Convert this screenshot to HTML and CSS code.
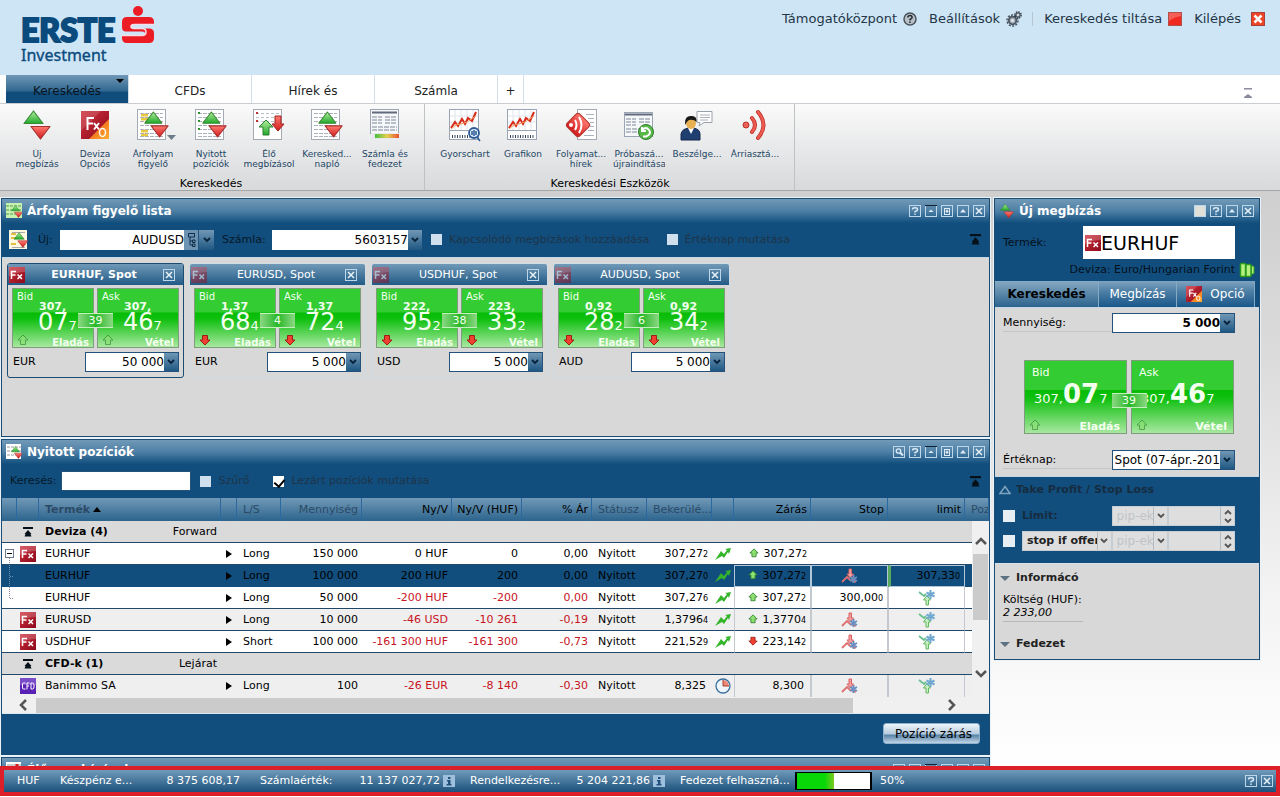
FILE: index.html
```html
<!DOCTYPE html>
<html lang="hu">
<head>
<meta charset="utf-8">
<title>Erste Investment</title>
<link rel="stylesheet" href="styles.css">
</head>
<body>
<svg class="defs" aria-hidden="true">
  <defs>
    <linearGradient id="g-green" x1="0" y1="0" x2="0" y2="1"><stop offset="0" stop-color="#b6f0a0"/><stop offset="1" stop-color="#1fa82a"/></linearGradient>
    <linearGradient id="g-red" x1="0" y1="0" x2="0" y2="1"><stop offset="0" stop-color="#ff7a70"/><stop offset="1" stop-color="#cf1a1a"/></linearGradient>
    <linearGradient id="g-fx" x1="0" y1="0" x2="1" y2="1"><stop offset="0" stop-color="#d0303c"/><stop offset="1" stop-color="#8c0a1c"/></linearGradient>
    <linearGradient id="g-orange" x1="0" y1="0" x2="1" y2="1"><stop offset="0" stop-color="#e84a10"/><stop offset="1" stop-color="#ffae30"/></linearGradient>
    <linearGradient id="g-bar" x1="0" y1="0" x2="1" y2="0"><stop offset="0" stop-color="#3fbf3f"/><stop offset=".5" stop-color="#e6d050"/><stop offset="1" stop-color="#e85030"/></linearGradient>
    <symbol id="updown" viewBox="0 0 28 30"><path d="M10.500 1L20 13.500H1Z" fill="url(#g-green)" stroke="#3a8a34" stroke-width="1.200" stroke-linejoin="round"/><path d="M8 16.500H27L17.500 29Z" fill="url(#g-red)" stroke="#a83030" stroke-width="1.200" stroke-linejoin="round"/></symbol>
    <symbol id="sheet" viewBox="0 0 34 34"><rect x="1.500" y="1.500" width="28" height="30" fill="#fff" stroke="#a3aab4"/></symbol>
    <symbol id="lines" viewBox="0 0 34 34"><path d="M4 5.500H27M4 9.500H27M4 13.500H27M4 17.500H27M4 21.500H27M4 25.500H27M4 28.500H27" stroke="#aab2bd" stroke-dasharray="4 1"/></symbol>
    <symbol id="fx" viewBox="0 0 16 16"><rect width="16" height="16" fill="url(#g-fx)"/><path d="M0 0H16V5Q8 5 0 9Z" fill="#fff" opacity=".2"/><path d="M2.500 12V4.500H7M2.500 8H6.500M8.500 7.500L13 12M13 7.500L8.500 12" stroke="#fff" stroke-width="1.500" fill="none"/></symbol>
    <symbol id="fxo" viewBox="0 0 28 28"><rect width="28" height="28" fill="url(#g-fx)"/><path d="M28 8V28H8Z" fill="url(#g-orange)"/><path d="M0 0H20L0 20Z" fill="#fff" opacity=".15"/><path d="M6.500 19V7H13M6.500 12.500H12M13 12L18 18.500M18 12L13 18.500" stroke="#fff" stroke-width="2" fill="none"/><ellipse cx="21.500" cy="21.500" rx="3" ry="4" fill="none" stroke="#fff" stroke-width="1.500"/></symbol>
    <symbol id="cfd" viewBox="0 0 16 16"><rect width="16" height="16" fill="#5a22b4"/><rect width="16" height="7" fill="#7a4cca"/><path d="M5.500 5H3.500Q2.500 5 2.500 6V10Q2.500 11 3.500 11H5.500M7 11.500V5H9.500M7 8H9M11 5V11H12.500Q14 11 14 9V7Q14 5 12.500 5Z" stroke="#fff" fill="none"/></symbol>
    <symbol id="chev" viewBox="0 0 8 6"><path d="M1 1L4 4L7 1" stroke="currentColor" stroke-width="1.800" fill="none"/></symbol>
    <symbol id="w-help" viewBox="0 0 12 12"><rect x=".5" y=".5" width="11" height="11" fill="none" stroke="#bcd7ea"/><path d="M3.500 4.500Q3.500 2.800 6 2.800T8.500 4.500Q8.500 6 6 6.500V7.500M6 8.500V10" fill="none" stroke="#dcebf7" stroke-width="1.400"/></symbol>
    <symbol id="w-up" viewBox="0 0 12 12"><rect x=".5" y=".5" width="11" height="11" fill="none" stroke="#bcd7ea"/><path d="M3 7.500L6 4L9 7.500Z" fill="#dcebf7"/></symbol>
    <symbol id="w-min" viewBox="0 0 12 12"><rect x=".5" y=".5" width="11" height="11" fill="none" stroke="#bcd7ea"/><path d="M0 .5H12" stroke="#123" stroke-width="1"/><path d="M3.500 7L6 4.500L8.500 7Z" fill="#dcebf7"/></symbol>
    <symbol id="w-dock" viewBox="0 0 12 12"><rect x=".5" y=".5" width="11" height="11" fill="none" stroke="#bcd7ea"/><rect x="3.500" y="3.500" width="5" height="6" fill="none" stroke="#dcebf7"/><path d="M6 4.500V8M4.500 6.200H7.500" stroke="#fff"/></symbol>
    <symbol id="w-close" viewBox="0 0 12 12"><rect x=".5" y=".5" width="11" height="11" fill="none" stroke="#bcd7ea"/><path d="M3 3L9 9M9 3L3 9" stroke="#e6f1fa" stroke-width="1.500"/></symbol>
    <symbol id="w-search" viewBox="0 0 12 12"><rect x=".5" y=".5" width="11" height="11" fill="none" stroke="#bcd7ea"/><circle cx="5.500" cy="5" r="2.200" fill="none" stroke="#dcebf7" stroke-width="1.300"/><path d="M7 6.500L10 9.500" stroke="#dcebf7" stroke-width="2"/></symbol>
    <symbol id="collapse" viewBox="0 0 10 10"><path d="M0 1H10" stroke="#061018" stroke-width="2"/><path d="M5 3L8.500 7H7.500L8.500 9.500H1.500L2.500 7H1.500Z" fill="#061018"/></symbol>
    <symbol id="up" viewBox="0 0 12 12"><path d="M6 1L11 6H8.500V10.500H3.500V6H1Z" fill="#8ce070" stroke="#2d7d2d"/></symbol>
    <symbol id="down" viewBox="0 0 12 12"><path d="M6 11L11 6H8.500V1.500H3.500V6H1Z" fill="#f04030" stroke="#9c2018"/></symbol>
    <symbol id="trend" viewBox="0 0 16 12"><path d="M0 12L6 3L9 6L12 2L10 1L16 0L14 6L13 4L9 10L7 8Z" fill="#35b52c"/></symbol>
    <symbol id="add-stop" viewBox="0 0 18 16"><path d="M1 14L6 9L9 12L15 14" stroke="#e07070" stroke-width="1.800" fill="none"/><path d="M8 1H10.500V6H12.500L9.200 10L6 6H8Z" fill="#f4a0a0" stroke="#d86060"/><path d="M12.500 7V15M9 9L16 13M16 9L9 13" stroke="#6a8fc0" stroke-width="2"/></symbol>
    <symbol id="add-limit" viewBox="0 0 18 16"><path d="M1 2L6 6L8 4" stroke="#6cc090" stroke-width="1.800" fill="none"/><path d="M8 15V10H5.500L9 5.500L12.500 10H10.500V15Z" fill="#c8f0c0" stroke="#60b860"/><path d="M12.500 0V9M8.500 2.500L16.500 6.500M16.500 2.500L8.500 6.500" stroke="#70a8d0" stroke-width="2"/></symbol>
    <symbol id="play" viewBox="0 0 6 8"><path d="M0 0L6 4L0 8Z" fill="#000"/></symbol>
    <symbol id="chart" viewBox="0 0 34 34"><rect x="1.500" y="1.500" width="29" height="30" fill="#fff" stroke="#9aa4b4"/><path d="M7 2V22M13 2V22M19 2V22M25 2V22M2 8H30M2 14H30" stroke="#dfe6ec"/><path d="M2 22.500H30" stroke="#9aa4b4"/><path d="M3 20L7 14L10 18L14 11L17 16L20 10L24 13L28 4" stroke="#d82818" stroke-width="2" fill="none"/><path d="M3 21L8 17L13 16L19 14L28 8" stroke="#f0a060" fill="none"/><path d="M4 28.500H29" stroke="#3d4660" stroke-width="3" stroke-dasharray="1 1.500"/></symbol>
    <symbol id="info" viewBox="0 0 12 12"><rect width="12" height="12" fill="#9fc0dc"/><path d="M5 2H7.500V4H5ZM4 5H7.500V9H8.500V10.500H3.500V9H5V6.500H4Z" fill="#24507c"/></symbol>
  </defs>
</svg>

<header class="top">
  <div class="logo">
    <div class="brand"><span>ERSTE</span>
      <svg width="32" height="38" viewBox="0 0 32 38"><circle cx="16" cy="5" r="5" fill="#ec1c24"/><path d="M5 11H27Q32 11 32 16V18.500H12Q9 18.500 9 20.500T12 22.500H27Q32 22.500 32 27V32Q32 37 27 37H5Q0 37 0 32V29.500H20Q23 29.500 23 27.500T20 25.500H4Q0 25.500 0 21V16Q0 11 5 11Z" fill="#ec1c24"/><path d="M32 18.500H12Q9 18.500 9 20.500T12 22.500H20Q24 22.500 24 26T20 29.500H0" stroke="#f3dfe8" stroke-width="1.500" fill="none"/></svg>
    </div>
    <div class="sub">Investment</div>
  </div>
  <nav class="links">
    <a href="#">Támogatóközpont<svg width="14" height="14" viewBox="0 0 14 14"><circle cx="7" cy="7" r="6" fill="#b8c0c8" stroke="#4a525c" stroke-width="1.500"/><path d="M4.800 5.500Q5 3.500 7 3.500T9.200 5.300Q9.200 6.500 7 7.500V8.500M7 9.500V11" stroke="#222a33" stroke-width="1.500" fill="none"/></svg></a>
    <a href="#">Beállítások<svg width="16" height="16" viewBox="0 0 16 16"><circle cx="6.500" cy="9.500" r="5.500" fill="none" stroke="#4a5662" stroke-width="1.500" stroke-dasharray="2 1.400"/><circle cx="6.500" cy="9.500" r="3.800" fill="#a4aeb8" stroke="#4a5662" stroke-width="1.800"/><circle cx="6.500" cy="9.500" r="1.500" fill="#e4eaee"/><circle cx="12" cy="4" r="3.200" fill="none" stroke="#303a46" stroke-width="1.300" stroke-dasharray="1.500 1"/><circle cx="12" cy="4" r="2.200" fill="#a4aeb8" stroke="#303a46"/><circle cx="12" cy="4" r="1" fill="#e4eaee"/></svg></a>
    <a href="#" class="split">Kereskedés tiltása<svg width="14" height="14" viewBox="0 0 14 14"><rect x=".5" y=".5" width="13" height="13" fill="#f02a20" stroke="#b05048"/><path d="M1 1H13V4Q6 5 1 9Z" fill="#fff" opacity=".25"/></svg></a>
    <a href="#" class="exit">Kilépés<svg width="14" height="14" viewBox="0 0 14 14"><rect x=".5" y=".5" width="13" height="13" fill="#ee4428" stroke="#a84038"/><path d="M3.500 3.500L10.500 10.500M10.500 3.500L3.500 10.500" stroke="#fff" stroke-width="2.500"/></svg></a>
  </nav>
</header>

<nav class="tabs">
  <button class="tab on">Kereskedés<svg class="tabmenu" width="8" height="4" viewBox="0 0 8 4"><path d="M0 0H8L4 4Z"/></svg></button>
  <button class="tab">CFDs</button>
  <button class="tab">Hírek és</button>
  <button class="tab">Számla</button>
  <button class="tab plus">+</button>
  <button class="shrink" aria-label="Menüszalag"><svg width="8" height="10" viewBox="0 0 8 10"><path d="M0 .8H8" stroke="#8a8aa0" stroke-width="1.500"/><path d="M4 6L8 9H0Z" fill="#8a8aa0"/><path d="M0 9.500H8" stroke="#8a8aa0"/></svg></button>
</nav>

<section class="ribbon">
  <div class="group">
    <div class="tools">
      <button class="tool"><svg viewBox="0 0 34 34"><use href="#updown" x="3" y="2" width="28" height="30"/></svg><span>Új megbízás</span></button>
      <button class="tool"><svg viewBox="0 0 34 34"><use href="#fxo" x="3" y="3" width="28" height="28"/></svg><span>Deviza Opciós</span></button>
      <button class="tool"><svg viewBox="0 0 34 34"><use href="#sheet" width="34" height="34"/><path d="M5 7H12M5 11H12M5 23H12M5 27H12" stroke="#e8c840" stroke-width="3"/><use href="#lines" width="34" height="34"/><use href="#updown" x="8" y="3" width="25" height="27"/></svg><svg class="more" viewBox="0 0 9 5"><path d="M0 0H9L4.500 5Z" fill="#6e7c8a"/></svg><span>Árfolyam figyelő</span></button>
      <button class="tool"><svg viewBox="0 0 34 34"><use href="#sheet" width="34" height="34"/><use href="#lines" width="34" height="34"/><path d="M4 5H6M4 13H6M4 21H6" stroke="#2a9030" stroke-width="2"/><use href="#updown" x="8" y="3" width="25" height="27"/></svg><span>Nyitott pozíciók</span></button>
      <button class="tool"><svg viewBox="0 0 34 34"><use href="#sheet" width="34" height="34"/><path d="M4 5.500H27M4 9.500H27M4 13.500H27" stroke="#bbc2cb" stroke-dasharray="3 2"/><path d="M4 5H6M4 13H6" stroke="#c03030" stroke-width="2"/><path d="M14 12L21 19H17V27H11V19H7Z" fill="url(#g-green)" stroke="#2a8030"/><path d="M26 23L32 16H29V8H23V16H20Z" fill="url(#g-red)" stroke="#a02020"/></svg><span>Élő megbízásol</span></button>
      <button class="tool"><svg viewBox="0 0 34 34"><use href="#sheet" width="34" height="34"/><use href="#lines" width="34" height="34"/><use href="#updown" x="8" y="3" width="25" height="27"/></svg><span>Keresked... napló</span></button>
      <button class="tool"><svg viewBox="0 0 34 34"><rect x="2.500" y="1.500" width="28" height="24" fill="#f6f7f9" stroke="#9aa4b4"/><path d="M4 4.500H29" stroke="#606a7c" stroke-width="2"/><path d="M4 9H14M4 12H14M4 15H14M17 9H29M17 12H29M17 15H29M4 19H29M4 22H29" stroke="#7c8798" stroke-dasharray="5 1"/><rect x="3" y="25" width="28" height="6" fill="#e6e8ec"/><rect x="7" y="26" width="24" height="4" fill="url(#g-bar)"/></svg><span>Számla&nbsp;és fedezet</span></button>
    </div>
    <h2>Kereskedés</h2>
  </div>
  <div class="group two">
    <div class="tools">
      <button class="tool"><svg viewBox="0 0 34 34"><use href="#chart" width="34" height="34"/><circle cx="26" cy="25" r="5" fill="#dcecf8" stroke="#2c5a98" stroke-width="1.800"/><path d="M24 23V27M26 22V28M28 23V27M29 29L32 33" stroke="#2c5a98" stroke-width="1.500"/></svg><span>Gyorschart</span></button>
      <button class="tool"><svg viewBox="0 0 34 34"><use href="#chart" width="34" height="34"/></svg><span>Grafikon</span></button>
      <button class="tool"><svg viewBox="0 0 34 34"><rect x="13.500" y="1.500" width="19" height="30" fill="#fff" stroke="#a3aab4"/><path d="M22 6.500H30M24 10.500H30M26 14.500H30M26 18.500H30M24 22.500H30M20 27.500H30" stroke="#aab2bd"/><rect x="5" y="8" width="18" height="18" rx="3" transform="rotate(45 14 17)" fill="url(#g-red)" stroke="#b03028"/><circle cx="7" cy="17" r="2" fill="#fff"/><path d="M11 12Q14 17 11 22M15 9Q20 17 15 25" stroke="#fff" stroke-width="2" fill="none"/></svg><span>Folyamat... hírek</span></button>
      <button class="tool"><svg viewBox="0 0 34 34"><rect x="2.500" y="4.500" width="28" height="24" fill="#f6f7f9" stroke="#9aa4b4"/><path d="M3 6.500H30" stroke="#606a7c" stroke-width="2"/><path d="M4 11H14M4 14H14M4 17H14M17 11H29M17 14H29M4 21H24M4 24H24" stroke="#7c8798" stroke-dasharray="5 1"/><circle cx="24" cy="24" r="7.500" fill="#58b848" stroke="#2c7c2c"/><path d="M20 22Q24 18 27 22T24 28.500H21M20 19V23H24" stroke="#fff" stroke-width="2" fill="none"/></svg><span>Próbaszá... újraindítása</span></button>
      <button class="tool"><svg viewBox="0 0 34 34"><path d="M17 3.500H32V14.500H24L19 18L20 14.500H17Z" fill="#fff" stroke="#98a0aa"/><path d="M20 7H30M20 9.500H30M20 12H28" stroke="#a8b0ba"/><path d="M1 32V26Q2 20 11 20T20 26V32Z" fill="#1e3f70" stroke="#12284c"/><path d="M8 20L11 26L14 20Z" fill="#fff"/><ellipse cx="11" cy="15" rx="5" ry="6" fill="#e8b050"/><path d="M5 15Q5 7 12 8Q17 8 16.500 14Q14 11 9 12Q7 13 5 17Z" fill="#181818"/></svg><span>Beszélge...</span></button>
      <button class="tool"><svg viewBox="0 0 34 34"><circle cx="8" cy="17" r="3" fill="#ec6055" stroke="#b83028"/><path d="M14 10Q20 17 14 24M20 4Q31 17 20 30" stroke="#b83028" stroke-width="4" fill="none" stroke-linecap="round"/><path d="M14 10Q20 17 14 24M20 4Q31 17 20 30" stroke="#f05a50" stroke-width="2.500" fill="none" stroke-linecap="round"/></svg><span>Árriasztá...</span></button>
    </div>
    <h2>Kereskedési Eszközök</h2>
  </div>
</section>

<main class="work">
  <div class="left">
    <section class="panel">
      <header class="title"><svg width="16" height="16" viewBox="0 0 16 16"><rect width="16" height="15" fill="#c8f0b0"/><path d="M0 3H16M0 7H16M0 11H16" stroke="#50a048" stroke-dasharray="3 1"/><use href="#updown" x="5" y="1" width="12" height="15"/></svg><h1>Árfolyam figyelő lista</h1>
        <div class="win"><button aria-label="Súgó"><svg><use href="#w-help"/></svg></button><button aria-label="Kicsinyítés"><svg><use href="#w-min"/></svg></button><button aria-label="Dokkolás"><svg><use href="#w-dock"/></svg></button><button aria-label="Fel"><svg><use href="#w-up"/></svg></button><button aria-label="Bezárás"><svg><use href="#w-close"/></svg></button></div>
      </header>
      <div class="bar watchbar">
        <svg class="newicon" viewBox="0 0 20 20"><rect width="18" height="19" fill="#fff8e0"/><path d="M2 4H7M2 8H7M2 14H7" stroke="#e0c040" stroke-width="2"/><path d="M3 2.500H16M3 17.500H16" stroke="#aaa"/><use href="#updown" x="4" y="2" width="16" height="16"/></svg>
        <label for="uj">Új:</label>
        <div class="combo prod"><input id="uj" value="AUDUSD"><button class="tree" aria-label="Lista"><svg width="9" height="16" viewBox="0 0 9 16"><path d="M1.500 1.500H7.500V5H1.500ZM3 5V13H5M3 9H5M5.500 8V10.500H8V8ZM5.500 12V14.500H8V12Z" stroke="#0c2c48" fill="none"/></svg></button><button class="arr" aria-label="Lenyit"><svg><use href="#chev"/></svg></button></div>
        <label for="szamla">Számla:</label>
        <div class="combo acct"><input id="szamla" value="5603157"><button class="arr" aria-label="Lenyit"><svg><use href="#chev"/></svg></button></div>
        <label class="check dim linked"><input type="checkbox">Kapcsolódó megbízások hozzáadása</label>
        <label class="check dim"><input type="checkbox">Értéknap mutatása</label>
        <svg class="fold" viewBox="0 0 10 10"><use href="#collapse"/></svg>
      </div>
      <div class="cards">
        <article class="card on">
          <header><svg><use href="#fx"/></svg><h3>EURHUF, Spot</h3><button aria-label="Bezárás"><svg><use href="#w-close"/></svg></button></header>
          <div class="pair"><button class="quote"><span class="k">Bid</span><b class="h">307,</b><span class="p">07<small>7</small></span><span class="f"><svg class="soft"><use href="#up"/></svg><b>Eladás</b></span></button><button class="quote"><span class="k">Ask</span><b class="h">307,</b><span class="p">46<small>7</small></span><span class="f"><svg class="soft"><use href="#up"/></svg><b>Vétel</b></span></button><span class="spread">39</span></div>
          <div class="amount"><label for="a1">EUR</label><div class="combo"><input id="a1" value="50 000"><button class="arr" aria-label="Lenyit"><svg><use href="#chev"/></svg></button></div></div>
        </article>
        <article class="card">
          <header><svg><use href="#fx"/></svg><h3>EURUSD, Spot</h3><button aria-label="Bezárás"><svg><use href="#w-close"/></svg></button></header>
          <div class="pair"><button class="quote"><span class="k">Bid</span><b class="h">1,37</b><span class="p">68<small>4</small></span><span class="f"><svg><use href="#down"/></svg><b>Eladás</b></span></button><button class="quote"><span class="k">Ask</span><b class="h">1,37</b><span class="p">72<small>4</small></span><span class="f"><svg><use href="#down"/></svg><b>Vétel</b></span></button><span class="spread">4</span></div>
          <div class="amount"><label for="a2">EUR</label><div class="combo"><input id="a2" value="5 000"><button class="arr" aria-label="Lenyit"><svg><use href="#chev"/></svg></button></div></div>
        </article>
        <article class="card">
          <header><svg><use href="#fx"/></svg><h3>USDHUF, Spot</h3><button aria-label="Bezárás"><svg><use href="#w-close"/></svg></button></header>
          <div class="pair"><button class="quote"><span class="k">Bid</span><b class="h">222,</b><span class="p">95<small>2</small></span><span class="f"><svg><use href="#down"/></svg><b>Eladás</b></span></button><button class="quote"><span class="k">Ask</span><b class="h">223,</b><span class="p">33<small>2</small></span><span class="f"><svg><use href="#down"/></svg><b>Vétel</b></span></button><span class="spread">38</span></div>
          <div class="amount"><label for="a3">USD</label><div class="combo"><input id="a3" value="5 000"><button class="arr" aria-label="Lenyit"><svg><use href="#chev"/></svg></button></div></div>
        </article>
        <article class="card">
          <header><svg><use href="#fx"/></svg><h3>AUDUSD, Spot</h3><button aria-label="Bezárás"><svg><use href="#w-close"/></svg></button></header>
          <div class="pair"><button class="quote"><span class="k">Bid</span><b class="h">0,92</b><span class="p">28<small>2</small></span><span class="f"><svg><use href="#down"/></svg><b>Eladás</b></span></button><button class="quote"><span class="k">Ask</span><b class="h">0,92</b><span class="p">34<small>2</small></span><span class="f"><svg><use href="#down"/></svg><b>Vétel</b></span></button><span class="spread">6</span></div>
          <div class="amount"><label for="a4">AUD</label><div class="combo"><input id="a4" value="5 000"><button class="arr" aria-label="Lenyit"><svg><use href="#chev"/></svg></button></div></div>
        </article>
      </div>
    </section>

    <section class="panel">
      <header class="title"><svg width="16" height="16" viewBox="0 0 16 16"><rect width="15" height="15" fill="#fff"/><path d="M1 3H15M1 7H15M1 11H15" stroke="#999" stroke-dasharray="3 1"/><use href="#updown" x="5" y="1" width="12" height="15"/></svg><h1>Nyitott pozíciók</h1>
        <div class="win"><button aria-label="Keresés"><svg><use href="#w-search"/></svg></button><button aria-label="Súgó"><svg><use href="#w-help"/></svg></button><button aria-label="Kicsinyítés"><svg><use href="#w-min"/></svg></button><button aria-label="Dokkolás"><svg><use href="#w-dock"/></svg></button><button aria-label="Fel"><svg><use href="#w-up"/></svg></button><button aria-label="Bezárás"><svg><use href="#w-close"/></svg></button></div>
      </header>
      <div class="bar posbar">
        <label for="ker">Keresés:</label><input id="ker" class="search" type="text">
        <label class="check dim"><input type="checkbox">Szűrő</label>
        <label class="check dim second"><input type="checkbox" checked>Lezárt pozíciók mutatása</label>
        <svg class="fold" viewBox="0 0 10 10"><use href="#collapse"/></svg>
      </div>
      <div class="grid">
        <table>
          <colgroup><col class="c15"><col class="c22"><col><col class="c16"><col class="c44"><col class="c81"><col class="c90"><col class="c70"><col class="c70"><col class="c55"><col class="c65"><col class="c22"><col class="c77"><col class="c77"><col class="c77"><col class="c24"></colgroup>
          <thead><tr><th></th><th></th><th class="l faded"><b>Termék</b> <svg class="sort" viewBox="0 0 8 5"><path d="M4 0L8 5H0Z"/></svg></th><th></th><th class="l faded">L/S</th><th class="faded">Mennyiség</th><th>Ny/V</th><th>Ny/V (HUF)</th><th>% Ár</th><th class="l faded">Státusz</th><th class="l faded">Bekerülé...</th><th></th><th>Zárás</th><th>Stop</th><th>limit</th><th class="l faded">Poz</th></tr></thead>
          <tbody>
            <tr class="grp"><td></td><td class="ic"><svg class="s10"><use href="#collapse"/></svg></td><td class="l"><div class="gname"><b>Deviza (4)</b><span>Forward</span></div></td><td colspan="13"></td></tr>
            <tr><td class="ic"><svg class="treeic" viewBox="0 0 15 21"><rect x="3.500" y="6.500" width="8" height="8" fill="#fff" stroke="#6b7c8c"/><path d="M5 10.500H10" stroke="#000"/><path d="M7.500 15V21" stroke="#889" stroke-dasharray="1 1"/></svg></td><td class="ic"><svg class="s16"><use href="#fx"/></svg></td><td class="l">EURHUF</td><td class="ic"><svg class="pl"><use href="#play"/></svg></td><td class="l">Long</td><td>150 000</td><td>0 HUF</td><td>0</td><td>0,00</td><td class="l">Nyitott</td><td>307,27<small>2</small></td><td class="ic"><svg class="tr"><use href="#trend"/></svg></td><td><svg class="s10"><use href="#up"/></svg>307,27<small>2</small></td><td></td><td></td><td></td></tr>
            <tr class="sel"><td class="ic"><svg class="treeic" viewBox="0 0 15 21"><path d="M7.500 0V21M8 11.500H12" stroke="#6f93b0" stroke-dasharray="1 1"/></svg></td><td></td><td class="l">EURHUF</td><td class="ic"><svg class="pl"><use href="#play"/></svg></td><td class="l">Long</td><td>100 000</td><td>200 HUF</td><td>200</td><td>0,00</td><td class="l">Nyitott</td><td>307,27<small>0</small></td><td class="ic"><svg class="tr"><use href="#trend"/></svg></td><td class="bx"><svg class="s10"><use href="#up"/></svg>307,27<small>2</small></td><td class="bx ic"><svg class="s18"><use href="#add-stop"/></svg></td><td class="bx mark">307,33<small>0</small></td><td></td></tr>
            <tr><td class="ic"><svg class="treeic" viewBox="0 0 15 21"><path d="M7.500 0V11M8 11.500H12" stroke="#889" stroke-dasharray="1 1"/></svg></td><td></td><td class="l">EURHUF</td><td class="ic"><svg class="pl"><use href="#play"/></svg></td><td class="l">Long</td><td>50 000</td><td class="n">-200 HUF</td><td class="n">-200</td><td class="n">0,00</td><td class="l">Nyitott</td><td>307,27<small>6</small></td><td class="ic"><svg class="tr"><use href="#trend"/></svg></td><td class="bx"><svg class="s10"><use href="#up"/></svg>307,27<small>2</small></td><td class="bx">300,00<small>0</small></td><td class="bx ic"><svg class="s18"><use href="#add-limit"/></svg></td><td></td></tr>
            <tr class="alt"><td></td><td class="ic"><svg class="s16"><use href="#fx"/></svg></td><td class="l">EURUSD</td><td class="ic"><svg class="pl"><use href="#play"/></svg></td><td class="l">Long</td><td>10 000</td><td class="n">-46 USD</td><td class="n">-10 261</td><td class="n">-0,19</td><td class="l">Nyitott</td><td>1,3796<small>4</small></td><td class="ic"><svg class="tr"><use href="#trend"/></svg></td><td class="bx"><svg class="s10"><use href="#up"/></svg>1,3770<small>4</small></td><td class="bx ic"><svg class="s18"><use href="#add-stop"/></svg></td><td class="bx ic"><svg class="s18"><use href="#add-limit"/></svg></td><td></td></tr>
            <tr><td></td><td class="ic"><svg class="s16"><use href="#fx"/></svg></td><td class="l">USDHUF</td><td class="ic"><svg class="pl"><use href="#play"/></svg></td><td class="l">Short</td><td>100 000</td><td class="n">-161 300 HUF</td><td class="n">-161 300</td><td class="n">-0,73</td><td class="l">Nyitott</td><td>221,52<small>9</small></td><td class="ic"><svg class="tr"><use href="#trend"/></svg></td><td class="bx"><svg class="s10"><use href="#down"/></svg>223,14<small>2</small></td><td class="bx ic"><svg class="s18"><use href="#add-stop"/></svg></td><td class="bx ic"><svg class="s18"><use href="#add-limit"/></svg></td><td></td></tr>
            <tr class="grp"><td></td><td class="ic"><svg class="s10"><use href="#collapse"/></svg></td><td class="l"><div class="gname"><b>CFD-k (1)</b><span>Lejárat</span></div></td><td colspan="13"></td></tr>
            <tr class="alt last"><td></td><td class="ic"><svg class="s16"><use href="#cfd"/></svg></td><td class="l">Banimmo SA</td><td class="ic"><svg class="pl"><use href="#play"/></svg></td><td class="l">Long</td><td>100</td><td class="n">-26 EUR</td><td class="n">-8 140</td><td class="n">-0,30</td><td class="l">Nyitott</td><td class="whole">8,325</td><td class="ic"><svg class="s16" viewBox="0 0 16 16"><circle cx="8" cy="8" r="7" fill="#eef6fc" stroke="#3d6f9c" stroke-width="1.300"/><path d="M8 8V2A6 6 0 0 1 14 8Z" fill="#f08878"/><path d="M8 2V8H14" stroke="#a04030" fill="none"/></svg></td><td class="bx whole">8,300</td><td class="bx ic"><svg class="s18"><use href="#add-stop"/></svg></td><td class="bx ic"><svg class="s18"><use href="#add-limit"/></svg></td><td></td></tr>
          </tbody>
        </table>
        <div class="vscroll"><svg width="12" height="10" viewBox="0 0 12 10"><path d="M1 8L6 3L11 8" stroke="#555" stroke-width="2.500" fill="none"/></svg><i></i><svg width="12" height="10" viewBox="0 0 12 10"><path d="M1 2L6 7L11 2" stroke="#555" stroke-width="2.500" fill="none"/></svg></div>
      </div>
      <div class="hscroll"><svg width="10" height="12" viewBox="0 0 10 12"><path d="M8 1L3 6L8 11" stroke="#555" stroke-width="2.500" fill="none"/></svg><div><i></i></div><svg width="10" height="12" viewBox="0 0 10 12"><path d="M2 1L7 6L2 11" stroke="#555" stroke-width="2.500" fill="none"/></svg></div>
      <footer class="foot"><button class="close-pos">Pozíció zárás</button></footer>
    </section>

    <section class="panel">
      <header class="title"><svg width="16" height="16" viewBox="0 0 16 16"><rect width="15" height="15" fill="#fff"/><path d="M1 3H15M1 7H15" stroke="#999"/><path d="M11 2V9" stroke="#d02020" stroke-width="3"/></svg><h1>Élő megbízások</h1>
        <div class="win"><button aria-label="Keresés"><svg><use href="#w-search"/></svg></button><button aria-label="Súgó"><svg><use href="#w-help"/></svg></button><button aria-label="Kicsinyítés"><svg><use href="#w-min"/></svg></button><button aria-label="Dokkolás"><svg><use href="#w-dock"/></svg></button><button aria-label="Fel"><svg><use href="#w-up"/></svg></button><button aria-label="Bezárás"><svg><use href="#w-close"/></svg></button></div>
      </header>
    </section>
  </div>

  <aside class="panel order">
    <header class="title"><svg width="14" height="16"><use href="#updown"/></svg><h1>Új megbízás</h1>
      <div class="win"><button class="pin" aria-label="Rögzítés"></button><button aria-label="Súgó"><svg><use href="#w-help"/></svg></button><button aria-label="Fel"><svg><use href="#w-up"/></svg></button><button aria-label="Bezárás"><svg><use href="#w-close"/></svg></button></div>
    </header>
    <div class="product">
      <label for="term">Termék:</label>
      <div class="prodbox"><svg><use href="#fx"/></svg><input id="term" value="EURHUF"></div>
    </div>
    <div class="desc"><span>Deviza: Euro/Hungarian Forint</span><svg width="16" height="16" viewBox="0 0 16 16"><rect x="1.500" y="1.500" width="5" height="13" rx="1" fill="#b8f080" stroke="#2c9c1c" stroke-width="1.500"/><rect x="7" y="2.500" width="5" height="12" rx="1" fill="#b8f080" stroke="#2c9c1c" stroke-width="1.500"/><rect x="12.500" y="4" width="2.500" height="8" rx="1" fill="#b8f080" stroke="#2c9c1c"/></svg></div>
    <div class="otabs"><button class="on">Kereskedés</button><button>Megbízás</button><button><svg width="16" height="16"><use href="#fxo"/></svg>Opció</button></div>
    <div class="form">
      <div class="row"><label for="menny">Mennyiség:</label><div class="combo strong"><input id="menny" value="5 000"><button class="arr" aria-label="Lenyit"><svg><use href="#chev"/></svg></button></div></div>
      <div class="pair big"><button class="quote"><span class="k">Bid</span><span class="p">307,<b>07</b>7</span><span class="f"><svg class="soft"><use href="#up"/></svg><b>Eladás</b></span></button><button class="quote"><span class="k">Ask</span><span class="p">307,<b>46</b>7</span><span class="f"><svg class="soft"><use href="#up"/></svg><b>Vétel</b></span></button><span class="spread">39</span></div>
      <div class="row"><label for="ertek">Értéknap:</label><div class="combo"><select id="ertek"><option>Spot (07-ápr.-2014)</option></select><span class="arr"><svg><use href="#chev"/></svg></span></div></div>
    </div>
    <div class="tpsl">
      <h2><svg width="12" height="10" viewBox="0 0 12 10"><path d="M6 1.500L11 8.500H1Z" fill="none" stroke="#7fa3bf" stroke-width="1.500"/></svg>Take Profit / Stop Loss</h2>
      <div class="tprow"><input id="lim" type="checkbox"><label class="tpl" for="lim">Limit:</label><div class="sel pip"><select aria-label="Limit egység" disabled><option>pip-ek</option></select><span><svg><use href="#chev"/></svg></span></div><div class="spin"><input aria-label="Limit érték" disabled><span><svg class="flip"><use href="#chev"/></svg><svg><use href="#chev"/></svg></span></div></div>
      <div class="tprow"><input type="checkbox" aria-label="Stop"><div class="sel kind"><select aria-label="Stop típus"><option>stop if offered</option></select><span><svg><use href="#chev"/></svg></span></div><div class="sel pip"><select aria-label="Stop egység" disabled><option>pip-ek</option></select><span><svg><use href="#chev"/></svg></span></div><div class="spin"><input aria-label="Stop érték" disabled><span><svg class="flip"><use href="#chev"/></svg><svg><use href="#chev"/></svg></span></div></div>
    </div>
    <div class="infos">
      <h2><svg width="10" height="5" viewBox="0 0 10 5"><path d="M0 0H10L5 5Z" fill="#5c7283"/></svg>Informácó</h2>
      <p>Költség (HUF):<br><em>2 233,00</em></p>
      <h2><svg width="10" height="5" viewBox="0 0 10 5"><path d="M0 0H10L5 5Z" fill="#5c7283"/></svg>Fedezet</h2>
    </div>
  </aside>
</main>

<footer class="status">
  <span class="cur">HUF</span>
  <span class="item"><span>Készpénz e...</span><span>8 375 608,17</span></span>
  <span class="item"><span>Számlaérték:</span><span>11 137 027,72</span></span><svg class="inf"><use href="#info"/></svg>
  <span class="item"><span>Rendelkezésre...</span><span>5 204 221,86</span></span><svg class="inf"><use href="#info"/></svg>
  <span class="margin">Fedezet felhaszná...</span>
  <span class="meter"><i style="width:50%"></i></span>
  <span>50%</span>
  <div class="win"><button aria-label="Súgó"><svg><use href="#w-help"/></svg></button><button aria-label="Bezárás"><svg><use href="#w-close"/></svg></button></div>
</footer>
</body>
</html>
```

FILE: styles.css
```css
* { box-sizing: border-box; }
body {
  margin: 0;
  height: 100vh;
  display: flex;
  flex-direction: column;
  overflow: hidden;
  background: #fff;
  color: #000;
  font: 11px/14px "DejaVu Sans", Verdana, sans-serif;
}
button, input, select { font: inherit; color: inherit; margin: 0; padding: 0; border: 0; background: none; border-radius: 0; min-width: 0; }
h1, h2, h3, p { margin: 0; font-size: inherit; }
svg { display: block; flex: none; }
.defs { position: absolute; width: 0; height: 0; }

/* Header */
.top { flex: none; height: 75px; background: #cee5f6; display: flex; justify-content: space-between; }
.logo { padding: 6px 0 0 21px; color: #0a4a7c; }
.brand { display: flex; gap: 7px; height: 38px; align-items: flex-end; }
.brand span { font: 900 32px/28px Lato, "Open Sans", sans-serif; -webkit-text-stroke: 2px #0a4a7c; }
.sub { font: 16px/22px "Noto Sans", "Open Sans", sans-serif; -webkit-text-stroke: 1px #0a4a7c; -webkit-text-stroke-width: thin; }
.links { display: flex; align-items: center; height: 20px; margin: 9px 15px 0 0; font-size: 13px; }
.links a { display: flex; align-items: center; gap: 6px; color: #243646; text-decoration: none; margin-right: 12px; }
.links .split { border-left: 1px solid #b4c6d4; padding-left: 11px; margin-left: -2px; }
.links .exit { margin-right: 0; gap: 10px; }

/* Main tabs */
.tabs { flex: none; height: 29px; display: flex; padding-left: 6px; border-bottom: 1px solid #c9cdd2; font-size: 12px; background: #fff; }
.tab { width: 123px; padding-top: 3px; border-right: 1px solid #cfe0ec; position: relative; color: #222; }
.tab.on { background: linear-gradient(#7097b6, #2f6790 58%, #104d7c 60%); color: #0a1420; }
.tabmenu { position: absolute; right: 4px; top: 4px; }
.tab.plus { width: 26px; }
.shrink { margin: 8px 28px 0 auto; }

/* Ribbon */
.ribbon { flex: none; display: flex; height: 87px; background: linear-gradient(#fafafa, #e8e9ea 50%, #d8d9da); border-bottom: 1px solid #a5a7a9; }
.group { padding: 4px 10px 0 8px; border-right: 1px solid #bfc2c5; }
.group.two { padding-left: 11px; }
.tools { display: flex; height: 70px; }
.tool { width: 58px; display: flex; flex-direction: column; align-items: center; position: relative; font-size: 9px; line-height: 10px; color: #1d4666; }
.tool > svg { width: 34px; height: 34px; margin-bottom: 7px; }
.tool .more { position: absolute; width: 9px; height: 5px; left: 43px; top: 27px; }
.tool span { height: 20px; width: min-content; max-width: 52px; overflow: hidden; }
.group h2 { text-align: center; font-weight: normal; line-height: 12px; }

/* Workspace */
.work { flex: 1; min-height: 0; overflow: hidden; display: flex; align-items: flex-start; gap: 4px; padding: 7px 20px 0 1px; background: linear-gradient(#cfcfcf, #dcdcdc 30%, #f3f3f3 70%, #fff); }
.left { flex: 1; min-width: 0; display: flex; flex-direction: column; gap: 2px; background: #fff; }
.panel { border: 1px solid #1a4c74; background: #d8d8d8; outline: 1px solid #e8f2f8; }
.title { height: 24px; display: flex; align-items: center; padding: 0 4px 1px; background: linear-gradient(#7199b7, #4d7fa5 50%, #114f7e); color: #fff; font-size: 12px; }
.title h1 { padding-left: 5px; }
.win { margin-left: auto; display: flex; gap: 4px; }
.win button, .win svg { width: 12px; height: 12px; }
.win .pin { background: #dfe0d8; border: 1px solid #bcd7ea; }
.bar { background: #114e7d; display: flex; align-items: center; color: #061828; }
.watchbar { height: 34px; padding: 0 8px 1px 7px; }
.newicon { width: 20px; height: 20px; margin-right: 9px; }
.watchbar > label:not(.check) { width: 50px; }
.watchbar > label[for="uj"] { width: 22px; }
.combo { position: relative; display: flex; height: 20px; border: 1px solid #24527a; background: #fff; font-size: 12px; color: #000; }
.combo input { flex: 1; text-align: right; width: 0; }
.arr { width: 14px; flex: none; display: flex; align-items: center; justify-content: center; background: linear-gradient(#7197b5, #1f5883); color: #07233b; }
.arr svg { width: 8px; height: 6px; }
.prod { width: 154px; margin-right: 8px; border: 0; }
.prod .tree { width: 14px; background: #6c93b1; display: flex; align-items: center; justify-content: center; }
.prod .tree + .arr { border-left: 1px solid #24527a; width: 16px; }
.acct { width: 150px; border: 0; margin-right: 9px; }
.check { display: flex; align-items: center; gap: 7px; margin-right: 24px; }
.linked { margin-right: 17px; }
input[type="checkbox"] { appearance: none; width: 11px; height: 11px; background: #cfdfed; flex: none; position: relative; }
input[type="checkbox"]:checked::after { content: ""; position: absolute; left: 3px; top: 1px; width: 5px; height: 8px; border: solid #000; border-width: 0 2px 2px 0; transform: rotate(40deg); }
input[type="checkbox"]:checked { background: #fff; }
.dim { color: #1e3449; }
.fold { margin-left: auto; width: 11px; height: 11px; }

/* Quote cards */
.cards { display: flex; align-items: flex-start; gap: 5px; padding: 5px; min-height: 179px; border-top: 1px solid #c5d8e6; }
.card { width: 177px; border: 1px solid #d0dce4; border-radius: 3px; padding: 0 4px 5px; background: #d8d8d8; }
.card.on { border-color: #1a4c74; }
.card header { display: flex; align-items: center; height: 21px; margin: 0 -4px 3px; padding: 0 8px 0 1px; background: linear-gradient(#7199b7, #215a86); color: #fff; border-radius: 2px 2px 0 0; }
.card header > svg { width: 16px; height: 16px; opacity: .5; }
.card.on header > svg { opacity: 1; }
.card h3 { flex: 1; text-align: center; font-weight: normal; }
.card.on h3 { font-weight: bold; }
.card header button, .card header button svg { width: 12px; height: 12px; }
.pair { display: flex; gap: 3px; position: relative; color: #f4fff0; }
.quote { flex: 1; height: 60px; padding-top: 1px; display: flex; flex-direction: column; text-align: left; background: linear-gradient(#33cc33 40%, #06bb06 41%, #10c010 52%, #a8e8a0); border: 1px solid #7f9c7c; white-space: nowrap; }
.quote .k { padding-left: 4px; font-size: 10px; line-height: 14px; }
.quote .h { padding-left: 26px; line-height: 6px; }
.quote .p { padding-left: 25px; font-size: 24px; line-height: 24px; }
.quote .p small { font-size: 13px; }
.quote .f { display: flex; justify-content: space-between; padding: 0 4px; font-size: 10px; line-height: 10px; }
.quote .f svg { width: 12px; height: 12px; margin-top: -4px; }
.quote .soft { opacity: .6; }
.spread { position: absolute; left: 0; right: 0; top: 25px; margin: auto; width: 35px; height: 15px; line-height: 14px; text-align: center; background: linear-gradient(90deg, #8cd884, #28b828 50%, #8cd884); border: solid #c4f0bc; border-width: 1px 0; }
.amount { display: flex; justify-content: space-between; align-items: center; margin-top: 4px; padding-left: 1px; }
.amount .combo { width: 94px; }

/* Positions */
.posbar { height: 34px; padding: 0 8px; }
.search { width: 130px; height: 20px; margin: 0 9px 0 5px; padding: 0 4px; background: #fff; border: 1px solid #24527a; }
.grid { position: relative; overflow: hidden; }
table { width: 100%; table-layout: fixed; border-collapse: separate; border-spacing: 0; }
.c15 { width: 15px; } .c16 { width: 16px; } .c22 { width: 22px; } .c24 { width: 24px; } .c44 { width: 44px; } .c55 { width: 55px; } .c65 { width: 65px; } .c70 { width: 70px; } .c77 { width: 77px; } .c81 { width: 81px; } .c90 { width: 90px; }
th, td { height: 22px; padding: 0 4px; text-align: right; white-space: nowrap; overflow: hidden; line-height: 18px; }
th { height: 23px; font-weight: normal; background: linear-gradient(#7199b7, #2c648d); border-right: 1px solid #2a6aa0; padding-right: 3px; }
.l { text-align: left; padding-left: 6px; }
th.l { padding-left: 6px; padding-right: 0; }
.faded { color: #2b4a66; }
.sort { display: inline-block; width: 8px; height: 5px; vertical-align: 1px; margin-left: -1px; }
td { background: #fff; border-bottom: 1px solid #20486a; }
td.l { padding-right: 0; }
.alt td { background: #efefef; }
.grp td { background: #dadada; }
.sel td { background: #114e7d; border-bottom-color: #114e7d; }
.last td { border-bottom: 0; }
.n { color: #c8141e; }
td small { font-size: 8px; line-height: 8px; }
.whole { padding-right: 6px; }
.gname { display: flex; justify-content: space-between; padding-right: 4px; }
td.ic { padding: 0; text-align: center; }
td svg { display: inline-block; vertical-align: middle; }
.s10 { width: 10px; height: 10px; }
td .s10 { margin: -2px 4px 0 0; }
td.ic svg { display: block; margin: 0 auto; }
.s16 { width: 16px; height: 16px; }
.s18 { width: 18px; height: 16px; }
.treeic { width: 15px; height: 21px; }
.pl { width: 6px; height: 8px; }
.tr { width: 16px; height: 12px; }
td.bx { border-left: 1px solid #c4c9cf; border-right: 1px solid #c4c9cf; }
.sel td.bx { border: 1px solid #b0c8da; }
.sel td.mark { border-left: 3px solid #58a860; }
.vscroll { position: absolute; right: 0; top: 23px; bottom: 0; width: 17px; background: #f0f0f0; display: flex; flex-direction: column; align-items: center; padding: 15px 0 18px; }
.vscroll i { width: 15px; height: 66px; margin-top: 8px; background: #cbcbcb; }
.vscroll svg:last-child { margin-top: auto; }
.hscroll { display: flex; align-items: center; height: 16px; background: #f0f0f0; padding: 0 32px 0 16px; }
.hscroll div { flex: 1; padding: 0 10% 0 8px; }
.hscroll i { display: block; height: 15px; background: #cbcbcb; }
.foot { display: flex; justify-content: flex-end; padding: 9px 9px 10px; background: #114e7d; border-top: 1px solid #dce8f0; }
.close-pos { width: 97px; height: 21px; padding-left: 4px; font-size: 12px; border: 1px solid #8db0cc; border-radius: 3px; background: linear-gradient(#eef4fa, #b8cde0 50%, #5b86aa 60%, #c0d4e6); }

/* Order ticket */
.order { flex: none; width: 266px; background: #114e7d; }
.order .title { padding: 0 5px 1px; }
.product { display: flex; height: 38px; align-items: center; padding: 1px 24px 0 8px; justify-content: space-between; color: #04101c; }
.prodbox { display: flex; align-items: center; width: 152px; height: 33px; background: #fff; font-size: 19px; padding-left: 2px; color: #000; }
.prodbox svg { width: 16px; height: 16px; }
.prodbox input { flex: 1; }
.desc { display: flex; justify-content: flex-end; align-items: center; gap: 4px; height: 20px; padding: 0 4px 2px 0; color: #04101c; }
.otabs { display: flex; height: 26px; padding-right: 4px; font-size: 12px; color: #fff; }
.otabs button { flex: 77; display: flex; align-items: center; justify-content: center; gap: 8px; background: linear-gradient(#7fa3bf, #4d7fa5 40%, #19578a); border-right: 1px solid #86a9c3; }
.otabs .on { flex: 103; color: #000; font-weight: bold; background: linear-gradient(#86a9c3, #2c648d); }
.form { background: #d8d8d8; border: solid #c5d8e6; border-width: 1px 0; padding: 5px 24px 6px 8px; }
.row { display: flex; justify-content: space-between; align-items: center; }
.row label { width: 109px; line-height: 17px; border-bottom: 1px solid #c0c6ca; }
.row .combo { width: 124px; }
.strong input { font-weight: bold; }
.combo select { appearance: none; flex: 1; width: 0; padding-left: 2px; overflow: hidden; white-space: nowrap; }
.big { width: 210px; gap: 4px; margin: 27px 0 16px 21px; }
.big .quote { height: 74px; padding-top: 5px; }
.big .k { font-size: 11px; padding-left: 7px; }
.big .p { padding-left: 9px; font-size: 13px; line-height: 28px; }
.big .p b { font-size: 26px; }
.big .f { padding: 5px 6px 0 4px; font-size: 11px; line-height: 18px; }
.big .f svg { margin-top: 1px; }
.big .spread { top: 33px; }
.tpsl { padding: 6px 24px 12px 8px; color: #162c40; font-weight: bold; }
.tpsl h2, .infos h2 { display: flex; gap: 5px; align-items: center; margin-left: -4px; }
.tprow { display: flex; align-items: center; height: 20px; margin-top: 5px; }
.tpsl h2 + .tprow { margin-top: 9px; }
.tprow > input { width: 12px; height: 12px; margin-right: 7px; background: #e6eef4; }
.tpl { width: 90px; }
div.sel { display: flex; height: 20px; background: #dedede; border: 1px solid #c6ced4; }
div.sel select { appearance: none; flex: 1; width: 0; padding-left: 4px; color: #222; overflow: hidden; opacity: 1; }
.kind { width: 90px; font-weight: bold; }
.pip { width: 57px; font-weight: normal; font-size: 12px; }
div.pip select { color: #c0c4c8; }
div.sel span { width: 14px; display: flex; align-items: center; justify-content: center; border-left: 1px solid #b4bcc2; color: #555; }
.kind svg, .pip svg { width: 8px; height: 6px; }
.spin { width: 67px; height: 20px; display: flex; background: #dedede; border: 1px solid #c6ced4; }
.spin input { flex: 1; width: 0; }
.spin span { width: 14px; display: flex; flex-direction: column; justify-content: space-around; align-items: center; border-left: 1px solid #b4bcc2; color: #555; }
.spin svg { width: 8px; height: 6px; }
.flip { transform: rotate(180deg); }
.infos { background: #d8d8d8; border-top: 1px solid #d5e2eb; padding: 7px 8px 8px; }
.infos h2 { gap: 6px; margin-left: -3px; color: #222; }
.infos p { width: 80px; margin: 8px 0 15px; padding-bottom: 2px; line-height: 13px; border-bottom: 1px solid #b8b8b8; white-space: nowrap; }

/* Status bar */
.status { flex: none; height: 30px; margin-bottom: 1px; display: flex; align-items: center; padding: 0 3px 0 13px; border: 4px solid #dd1f2a; background: linear-gradient(#6f9bba, #1d517b); color: #fff; }
.cur { width: 43px; }
.item { width: 180px; display: flex; justify-content: space-between; margin-right: 20px; }
.item:has(+ .inf) { margin-right: 3px; }
.inf { width: 12px; height: 12px; margin-right: 15px; }
.margin { width: 115px; }
.meter { width: 77px; height: 18px; border: 1px solid #000; border-width: 1px 2px; background: #fff; margin-right: 8px; }
.meter i { display: block; height: 100%; background: linear-gradient(90deg, #08d808 75%, #7cc820); }
```
